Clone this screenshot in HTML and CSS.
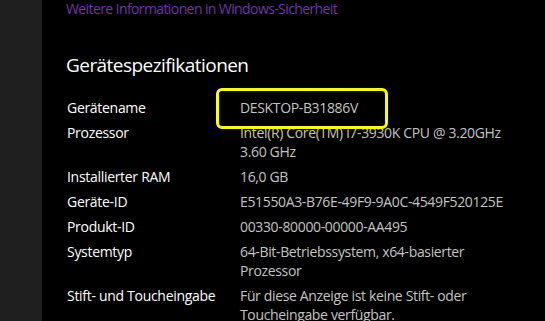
FILE: index.html
```html
<!DOCTYPE html>
<html lang="de">
<head>
  <meta charset="UTF-8">
  <title>Info</title>
  <link rel="stylesheet" href="styles.css">
</head>
<body>

  <div class="seitenleiste"></div>

  <div class="inhalt">
    <a class="link" href="#">Weitere Informationen in Windows-Sicherheit</a>

    <h2>Gerätespezifikationen</h2>

    <div class="tabelle">
      <div class="zeile">
        <span class="name">Gerätename</span>
        <span class="wert markiert">DESKTOP-B31886V<span class="rahmen"></span></span>
      </div>
      <div class="zeile">
        <span class="name">Prozessor</span>
        <span class="wert">Intel(R) Core(TM) i7-3930K CPU @ 3.20GHz<br>3.60 GHz</span>
      </div>
      <div class="zeile">
        <span class="name">Installierter RAM</span>
        <span class="wert">16,0 GB</span>
      </div>
      <div class="zeile">
        <span class="name">Geräte-ID</span>
        <span class="wert">E51550A3-B76E-49F9-9A0C-4549F520125E</span>
      </div>
      <div class="zeile">
        <span class="name">Produkt-ID</span>
        <span class="wert">00330-80000-00000-AA495</span>
      </div>
      <div class="zeile">
        <span class="name">Systemtyp</span>
        <span class="wert">64-Bit-Betriebssystem, x64-basierter<br>Prozessor</span>
      </div>
      <div class="zeile">
        <span class="name">Stift- und Toucheingabe</span>
        <span class="wert">Für diese Anzeige ist keine Stift- oder<br>Toucheingabe verfügbar.</span>
      </div>
    </div>
  </div>

</body>
</html>
```

FILE: styles.css
```css
:root {
  --schwarz: #000000;
  --leiste: #1f1f1f;
  --lila: #7236a8;
  --grau: #c4c4c4;
  --gelb: #ffff00;
}

body {
  margin: 0;
  background-color: var(--schwarz);
  color: #ffffff;
  font-family: "Open Sans", "Noto Sans", sans-serif;
  font-size: 14px;
  line-height: 19px;
  display: flex;
  height: 100vh;
  overflow: hidden;
}

.seitenleiste {
  width: 42px;
  flex-shrink: 0;
  background-color: var(--leiste);
}

.inhalt {
  padding-left: 24px;
}

.link {
  display: block;
  margin-top: -1px;
  color: var(--lila);
  text-decoration: none;
  letter-spacing: -0.6px;
}

h2 {
  font-size: 19px;
  font-weight: normal;
  letter-spacing: -0.55px;
  line-height: 26px;
  margin: 34px 0 20px 0;
}

.tabelle {
  display: flex;
  flex-direction: column;
  gap: 6px;
}

.zeile {
  display: flex;
}

.name {
  width: 173px;
  flex-shrink: 0;
  padding-left: 1px;
  letter-spacing: -0.3px;
}

.wert {
  color: var(--grau);
  letter-spacing: -0.35px;
}

.markiert {
  position: relative;
}

.rahmen {
  position: absolute;
  left: -24px;
  top: -10px;
  width: 166px;
  height: 35px;
  border: 3px solid var(--gelb);
  border-radius: 6px;
}
```
